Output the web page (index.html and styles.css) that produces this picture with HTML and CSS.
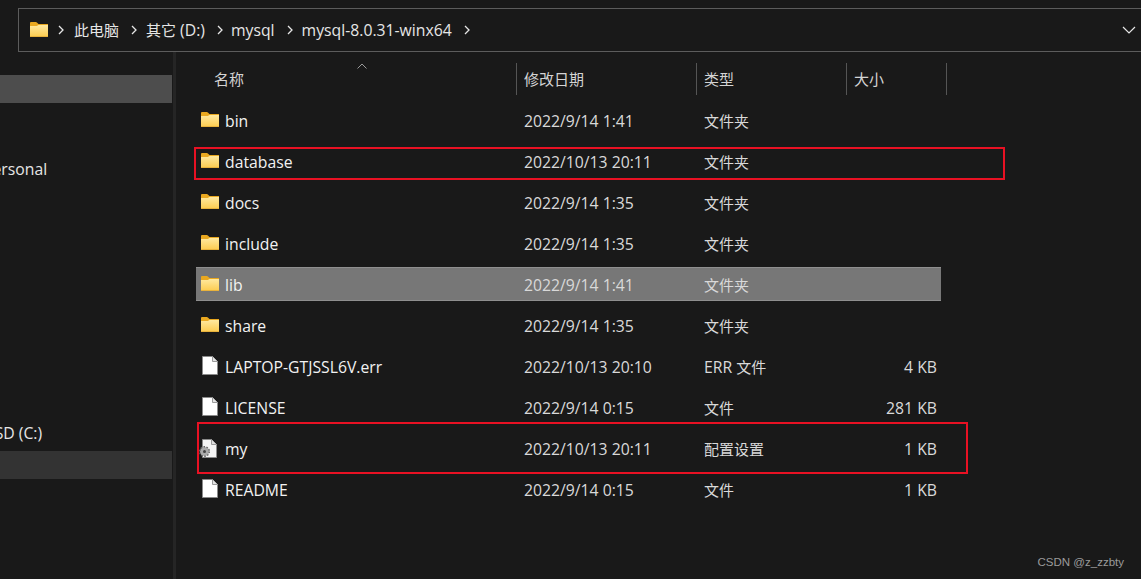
FILE: index.html
```html
<!DOCTYPE html>
<html lang="zh">
<head>
<meta charset="utf-8">
<title>mysql-8.0.31-winx64</title>
<link rel="stylesheet" href="styles.css">
</head>
<body>
<svg class="defs" width="0" height="0" aria-hidden="true">
  <defs>
    <linearGradient id="fg" x1="0" y1="0" x2="0" y2="1">
      <stop offset="0" stop-color="#ffe9a0"/>
      <stop offset="1" stop-color="#fccb4e"/>
    </linearGradient>
    <symbol id="folder" viewBox="0 0 18 15">
      <path d="M0 1.200C0 .5.5 0 1.200 0h4.600c.5 0 .8.2 1.100.5L8.500 2H18v13H0z" fill="#e9a820"/>
      <path d="M0 4h6.800L8.500 2.900H18V14a1 1 0 0 1-1 1H1a1 1 0 0 1-1-1z" fill="url(#fg)"/>
      <rect x="0" y="14" width="18" height="1" fill="#e8b23c"/>
    </symbol>
    <symbol id="file" viewBox="0 0 16 19">
      <path d="M.5.5h10l5 5v13H.5z" fill="#fff" stroke="#8a8a8a"/>
      <path d="M10.500.5v5h5" fill="#e4e4e4" stroke="#9a9a9a"/>
    </symbol>
    <symbol id="cfg" viewBox="0 0 18 19">
      <path d="M3.500.5h9l5 5v13h-14z" fill="#f4f4f4" stroke="#8a8a8a"/>
      <path d="M12.500.5v5h5" fill="#ddd" stroke="#9a9a9a"/>
      <circle cx="5.500" cy="12.500" r="4.600" fill="#aaa"/>
      <circle cx="5.500" cy="12.500" r="4.800" fill="none" stroke="#666" stroke-width="1.400" stroke-dasharray="1.600 1.400"/>
      <circle cx="5.500" cy="12.500" r="1.500" fill="#444"/>
    </symbol>
    <symbol id="chev" viewBox="0 0 6 10">
      <path d="M1 1l4 4-4 4" fill="none" stroke="#e6e6e6" stroke-width="1.300"/>
    </symbol>
  </defs>
</svg>

<header class="address">
  <svg class="addr-folder"><use href="#folder"/></svg>
  <svg class="chev first"><use href="#chev"/></svg>
  <span class="crumb zh">此电脑</span>
  <svg class="chev"><use href="#chev"/></svg>
  <span class="crumb"><span class="zh">其它</span> (D:)</span>
  <svg class="chev tight"><use href="#chev"/></svg>
  <span class="crumb">mysql</span>
  <svg class="chev"><use href="#chev"/></svg>
  <span class="crumb">mysql-8.0.31-winx64</span>
  <svg class="chev"><use href="#chev"/></svg>
  <svg class="addr-down" viewBox="0 0 14 8"><path d="M1 1l6 6 6-6" fill="none" stroke="#e6e6e6" stroke-width="1.200"/></svg>
</header>

<div class="body">
  <nav class="side">
    <div class="nav-item active"></div>
    <div class="nav-item personal"><span>Personal</span></div>
    <div class="nav-item ssd"><span>SSD (C:)</span></div>
    <div class="nav-item current"></div>
  </nav>

  <main class="main">
    <div class="cols head">
      <div class="hname">名称<svg class="sort" viewBox="0 0 10 6"><path d="M.5 5.500L5 1l4.500 4.500" fill="none" stroke="#9a9a9a"/></svg></div>
      <div class="hcell">修改日期</div>
      <div class="hcell">类型</div>
      <div class="hcell">大小</div>
    </div>

    <div class="cols row"><div class="name"><svg class="ico"><use href="#folder"/></svg>bin</div><div class="cell">2022/9/14 1:41</div><div class="cell zh">文件夹</div><div class="size"></div></div>
    <div class="cols row"><div class="name"><svg class="ico"><use href="#folder"/></svg>database</div><div class="cell">2022/10/13 20:11</div><div class="cell zh">文件夹</div><div class="size"></div></div>
    <div class="cols row"><div class="name"><svg class="ico"><use href="#folder"/></svg>docs</div><div class="cell">2022/9/14 1:35</div><div class="cell zh">文件夹</div><div class="size"></div></div>
    <div class="cols row"><div class="name"><svg class="ico"><use href="#folder"/></svg>include</div><div class="cell">2022/9/14 1:35</div><div class="cell zh">文件夹</div><div class="size"></div></div>
    <div class="cols row selected"><div class="name"><svg class="ico"><use href="#folder"/></svg>lib</div><div class="cell">2022/9/14 1:41</div><div class="cell zh">文件夹</div><div class="size"></div></div>
    <div class="cols row"><div class="name"><svg class="ico"><use href="#folder"/></svg>share</div><div class="cell">2022/9/14 1:35</div><div class="cell zh">文件夹</div><div class="size"></div></div>
    <div class="cols row"><div class="name"><svg class="ico file"><use href="#file"/></svg>LAPTOP-GTJSSL6V.err</div><div class="cell">2022/10/13 20:10</div><div class="cell">ERR <span class="zh">文件</span></div><div class="size">4 KB</div></div>
    <div class="cols row"><div class="name"><svg class="ico file"><use href="#file"/></svg>LICENSE</div><div class="cell">2022/9/14 0:15</div><div class="cell zh">文件</div><div class="size">281 KB</div></div>
    <div class="cols row"><div class="name"><svg class="ico cfgico"><use href="#cfg"/></svg>my</div><div class="cell">2022/10/13 20:11</div><div class="cell zh">配置设置</div><div class="size">1 KB</div></div>
    <div class="cols row"><div class="name"><svg class="ico file"><use href="#file"/></svg>README</div><div class="cell">2022/9/14 0:15</div><div class="cell zh">文件</div><div class="size">1 KB</div></div>
  </main>
</div>

<div class="mark mark-a"></div>
<div class="mark mark-b"></div>
<div class="watermark">CSDN @z_zzbty</div>
</body>
</html>
```
FILE: styles.css
```css
html, body {
  margin: 0;
  height: 100%;
  overflow: hidden;
  background: #191919;
}
body {
  position: relative;
  color: #e6e6e6;
  font: 15.75px/20px "Open Sans", "Noto Sans CJK SC", sans-serif;
}
.defs { position: absolute; }
.zh { font-size: 15px; }

.address {
  display: flex;
  align-items: center;
  box-sizing: border-box;
  height: 44px;
  margin: 8px 0 0 18px;
  padding-left: 11px;
  border: 1px solid #5c5c5c;
  border-right: 0;
  color: #e6e6e6;
}
.addr-folder { width: 18px; height: 15px; margin-top: -1px; }
.chev { width: 6px; height: 10px; margin: 0 9px 0 12px; }
.chev.first { margin: 0 10px 0 10px; }
.chev.tight { margin: 0 8px 0 12px; }
.crumb { white-space: nowrap; }
.addr-down { width: 14px; height: 8px; margin-left: auto; margin-right: 5px; }

.body { display: flex; height: 527px; }

.side {
  flex: none;
  width: 172px;
  padding-top: 23px;
  overflow: hidden;
  box-sizing: border-box;
}
.nav-item {
  height: 28px;
  line-height: 28px;
  white-space: nowrap;
}
.personal span { margin-left: -17px; }
.ssd span { margin-left: -14px; }
.active { background: #4d4d4d; }
.personal { margin-top: 52px; }
.ssd { margin-top: 236px; }
.current { margin-top: 4px; background: #333; }

.main {
  flex: 1;
  margin-left: 1px;
  padding: 11px 0 0 20px;
  border-left: 3px solid #252525;
}
.cols {
  display: grid;
  grid-template-columns: 320px 180px 150px 101px;
  width: 751px;
}
.head { height: 32px; margin-bottom: 5px; color: #d4d4d4; font-size: 15px; }
.hname {
  position: relative;
  padding-left: 18px;
  line-height: 32px;
}
.hcell {
  padding-left: 7px;
  line-height: 32px;
  border-left: 1px solid #555;
}
.hcell:last-child { border-right: 1px solid #555; }
.sort {
  position: absolute;
  left: 161px;
  top: 0;
  width: 10px;
  height: 6px;
}
.row {
  grid-template-columns: 320px 180px 150px 95px;
  width: 745px;
  height: 41px;
  align-items: center;
  color: #d9d9d9;
}
.name {
  display: flex;
  align-items: center;
  color: #f2f2f2;
  white-space: nowrap;
}
.ico { width: 18px; height: 15px; margin: -2px 6px 0 5px; flex: none; }
.ico.file { width: 16px; height: 19px; margin: -2px 7px 0 6px; }
.ico.cfgico { width: 18px; height: 19px; margin: -1px 8px 0 3px; }
.cell { padding-left: 8px; white-space: nowrap; }
.size { text-align: right; padding-right: 4px; white-space: nowrap; }
.selected {
  height: 34px;
  margin: 3px 0 4px;
  padding-top: 1px;
  box-sizing: border-box;
  background: #777;
  border: 1px solid #8f8f8f;
  border-width: 1px 0 1px;
}

.mark {
  position: absolute;
  box-sizing: border-box;
  border: 2px solid #e81123;
}
.mark-a { left: 194px; top: 147px; width: 811px; height: 33px; }
.mark-b { left: 197px; top: 422px; width: 771px; height: 52px; }

.watermark {
  position: absolute;
  right: 17px;
  bottom: 9px;
  font: 11.5px/16px "Liberation Sans", sans-serif;
  color: #9b9b9b;
}
```
